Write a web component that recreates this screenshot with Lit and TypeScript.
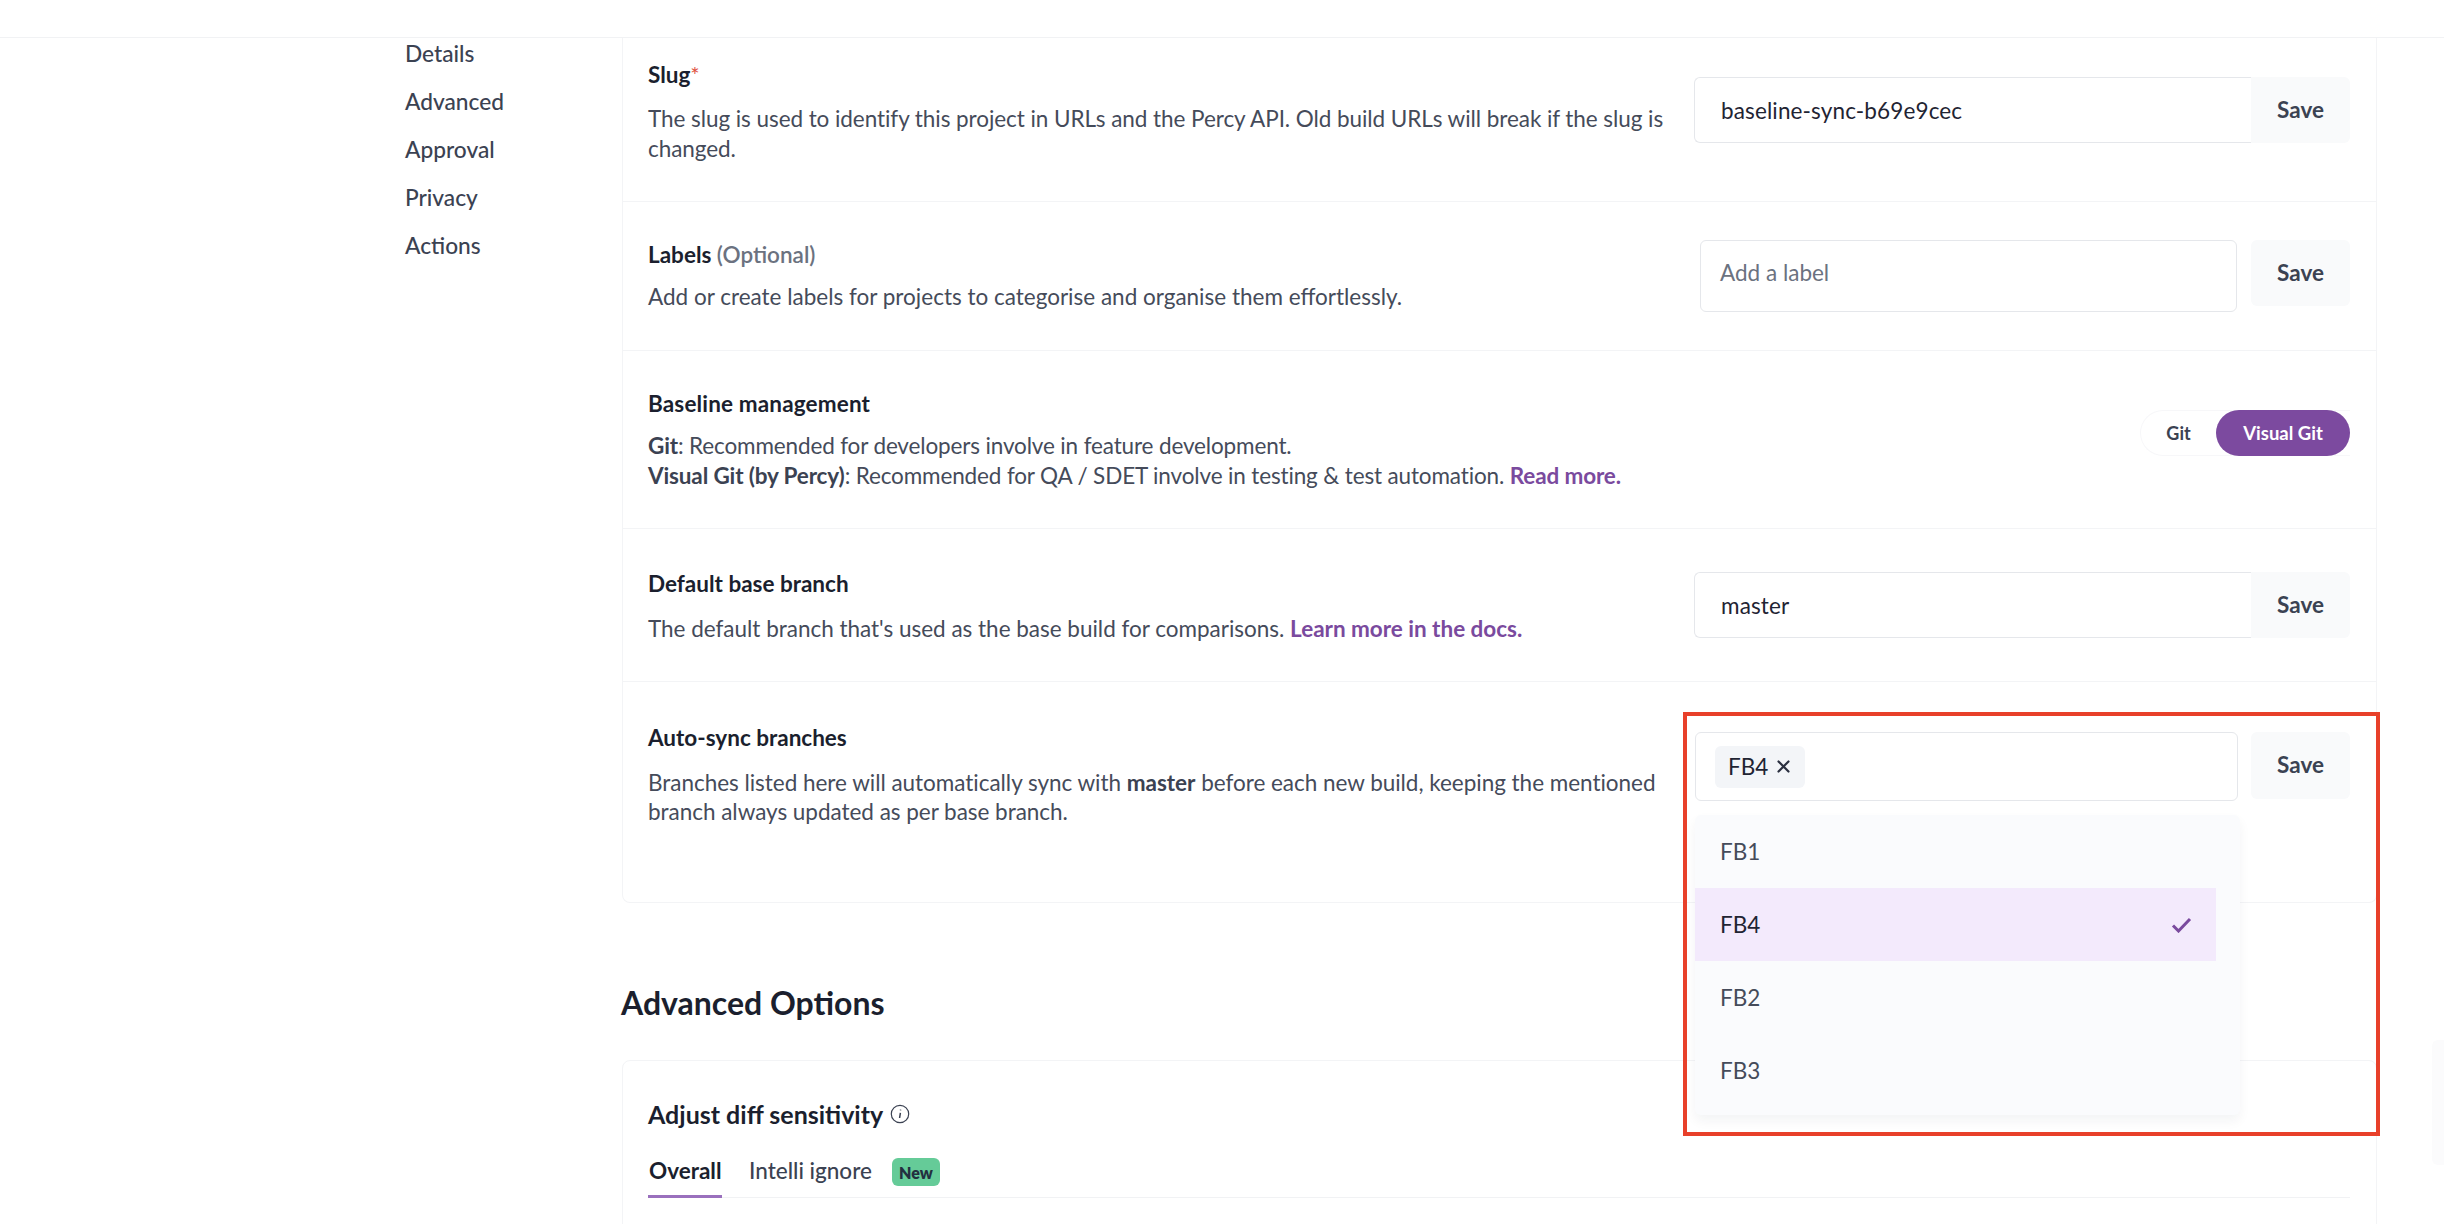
import { LitElement, html, css, svg } from "lit";
import { customElement } from "lit/decorators.js";

@customElement("app-root")
export class AppRoot extends LitElement {
  static styles = css`
    :host { display: block; position: relative; width: 2444px; height: 1224px; overflow: hidden; background: #fff;
      font-family: Lato, "Liberation Sans", sans-serif; color: #1f2433; }
    * { box-sizing: border-box; }
    .topbar { height: 38px; border-bottom: 1px solid #f1f2f4; }
    .main { display: flex; height: 1186px; }
    .side { width: 622px; padding: 0 0 0 405px; display: flex; flex-direction: column; flex: none; }
    .side a { height: 48px; line-height: 32px; font-size: 22.7px; font-weight: 500; color: #3b4252; }
    .content { width: 1755px; flex: none; }
    .card { border: 1px solid #f3f4f6; border-radius: 8px; }
    .card.first { border-top: 0; border-radius: 0 0 8px 8px; }
    .row { display: flex; justify-content: space-between; align-items: flex-start; padding: 0 26px 0 25px; border-bottom: 1px solid #f3f4f6; }
    .row:last-child { border-bottom: 0; }
    .r1 { height: 164px; }
    .r2 { height: 149px; }
    .r3 { height: 178px; }
    .r4 { height: 153px; }
    .r5 { height: 220px; }
    .text { width: 1030px; flex: none; }
    .r1 .text { margin-top: 25px; }
    .r2 .text, .r3 .text { margin-top: 41px; }
    .r4 .text { margin-top: 43px; }
    .r5 .text { margin-top: 44px; }
    .r1 .ctl { margin-top: 39px; }
    .r2 .ctl { margin-top: 38px; }
    .r4 .ctl { margin-top: 43px; }
    .r5 .ctl { margin-top: 50px; }
    .title { font-size: 22.5px; line-height: 24px; font-weight: 700; color: #1b1f2e; margin-bottom: 17.25px; }
    .r2 .title, .r3 .title { margin-bottom: 15.25px; }
    .r3 .title { letter-spacing: 0.15px; }
    .r4 .title, .r5 .title { margin-bottom: 17.5px; }
    .title .req { color: #e0523f; font-weight: 400; font-size: 22px; line-height: 0; }
    .title .opt { color: #6b7280; font-weight: 600; }
    .desc { font-size: 22.5px; line-height: 29.5px; color: #454b5a; }
    .r1 .desc { letter-spacing: -0.065px; }
    .r3 .desc { letter-spacing: -0.14px; }
    .r4 .desc { letter-spacing: -0.015px; }
    .r5 .desc { letter-spacing: -0.03px; }
    .desc b { font-weight: 700; color: #3b4252; }
    .desc a { color: #7a4a9e; font-weight: 700; }
    .ctl { display: flex; align-items: flex-start; position: relative; }
    .input { height: 66px; border: 1px solid #e5e7eb; border-radius: 6px; background: #fff; display: flex; align-items: center; font-size: 22.5px; color: #1f2433; }
    .input.joined { width: 557px; padding-left: 26px; border-right: 0; border-radius: 6px 0 0 6px; letter-spacing: 0.13px; }
    .input.placeholder { width: 537px; height: 72px; padding: 0 0 7px 19px; margin-right: 14px; color: #6b7280; letter-spacing: 0; }
    .input.tags { width: 543px; height: 69px; padding-left: 19px; margin-right: 13px; letter-spacing: 0; }
    .chip { width: 90px; height: 42px; border-radius: 6px; background: #f3f5f8; display: flex; align-items: center; padding-left: 13px; gap: 8px; }
    .chip svg { width: 15px; height: 15px; }
    .save { width: 99px; height: 66px; background: #f9fafb; border-radius: 0 6px 6px 0; display: flex; align-items: center; justify-content: center; font-size: 22.5px; font-weight: 700; color: #3b4252; padding-bottom: 2px; }
    .save.solo { border-radius: 6px; }
    .r5 .save { height: 67px; }
    .toggle { display: flex; align-items: center; height: 46px; margin-top: 59px; border: 1px solid #f7f7f9; border-radius: 23px 0 0 23px; border-right: 0; }
    .toggle .git { width: 75px; text-align: center; font-size: 18px; font-weight: 700; color: #3b4252; }
    .toggle .vg { width: 134px; height: 46px; margin-right: 0; border-radius: 23px; background: #7c4a9f; color: #fff; font-size: 18.5px; font-weight: 700; display: flex; align-items: center; justify-content: center; }
    .menu { position: absolute; left: 0; top: 83px; width: 545px; height: 300px; background: #fafbfd; border-radius: 6px; box-shadow: 0 6px 12px rgba(20, 30, 60, 0.05); padding-right: 24px; }
    .item { height: 73px; display: flex; align-items: center; justify-content: space-between; padding: 0 23px 0 25px; font-size: 22.5px; color: #454b5a; }
    .item.sel { background: #f3eafc; color: #1f2433; }
    .item svg { width: 22px; height: 16px; }
    .section { font-size: 32px; font-weight: 700; color: #1b1f2e; line-height: 40px; margin: 80px 0 37px -1px; }
    .adv { height: 200px; padding: 39px 26px 0 25px; }
    .adv h3 { display: flex; align-items: center; gap: 7px; margin: 0; font-size: 25px; line-height: 28px; font-weight: 700; color: #1b1f2e; }
    .adv h3 svg { width: 20px; height: 20px; }
    .tabs { display: flex; align-items: flex-start; height: 40px; margin-top: 30px; border-bottom: 1px solid #f1f2f4; font-size: 22.5px; }
    .tab { height: 40px; padding: 0 1px; line-height: 26px; }
    .tab.on { font-weight: 700; color: #1b1f2e; border-bottom: 3px solid #9a70bd; width: 74px; }
    .tab.off { margin-left: 26px; color: #3b4252; font-weight: 500; }
    .new { margin-left: 19px; margin-top: 0; width: 48px; height: 28px; border-radius: 6px; background: #65cb98; color: #233040; font-size: 16px; font-weight: 800; display: flex; align-items: center; justify-content: center; }
    .mark { position: absolute; left: 1683px; top: 712px; width: 697px; height: 424px; border: 4px solid #e8402a; pointer-events: none; }
    .thumb { position: absolute; right: 0; top: 1040px; width: 12px; height: 125px; background: #fbfbfc; border-radius: 6px 0 0 6px; }
  `;

  render() {
    const x = svg`<path d="M2.5 2.5 L12.5 12.5 M12.5 2.5 L2.5 12.5" stroke="#2b3040" stroke-width="2.2" stroke-linecap="round" fill="none"/>`;
    const check = svg`<path d="M2 8.5 L7.5 14 L19 2" stroke="#7a4a9e" stroke-width="3" fill="none"/>`;
    return html`
      <div class="topbar"></div>
      <div class="main">
        <nav class="side">
          <a>Details</a><a>Advanced</a><a>Approval</a><a>Privacy</a><a>Actions</a>
        </nav>
        <div class="content">
          <div class="card first">
            <div class="row r1">
              <div class="text">
                <div class="title">Slug<span class="req">*</span></div>
                <div class="desc">The slug is used to identify this project in URLs and the Percy API. Old build URLs will break if the slug is changed.</div>
              </div>
              <div class="ctl"><div class="input joined">baseline-sync-b69e9cec</div><div class="save">Save</div></div>
            </div>
            <div class="row r2">
              <div class="text">
                <div class="title">Labels <span class="opt">(Optional)</span></div>
                <div class="desc">Add or create labels for projects to categorise and organise them effortlessly.</div>
              </div>
              <div class="ctl"><div class="input placeholder">Add a label</div><div class="save solo">Save</div></div>
            </div>
            <div class="row r3">
              <div class="text">
                <div class="title">Baseline management</div>
                <div class="desc"><b>Git</b>: Recommended for developers involve in feature development.<br /><b>Visual Git (by Percy)</b>: Recommended for QA / SDET involve in testing &amp; test automation. <a>Read more.</a></div>
              </div>
              <div class="toggle"><div class="git">Git</div><div class="vg">Visual Git</div></div>
            </div>
            <div class="row r4">
              <div class="text">
                <div class="title">Default base branch</div>
                <div class="desc">The default branch that's used as the base build for comparisons. <a>Learn more in the docs.</a></div>
              </div>
              <div class="ctl"><div class="input joined">master</div><div class="save">Save</div></div>
            </div>
            <div class="row r5">
              <div class="text">
                <div class="title">Auto-sync branches</div>
                <div class="desc">Branches listed here will automatically sync with <b>master</b> before each new build, keeping the mentioned branch always updated as per base branch.</div>
              </div>
              <div class="ctl">
                <div class="input tags"><div class="chip">FB4<svg viewBox="0 0 15 15">${x}</svg></div></div>
                <div class="save solo">Save</div>
                <div class="menu">
                  <div class="item">FB1</div>
                  <div class="item sel">FB4<svg viewBox="0 0 22 16">${check}</svg></div>
                  <div class="item">FB2</div>
                  <div class="item">FB3</div>
                </div>
              </div>
            </div>
          </div>
          <div class="section">Advanced Options</div>
          <div class="card adv">
            <h3>Adjust diff sensitivity
              <svg viewBox="0 0 20 20"><circle cx="10" cy="10" r="8.7" stroke="#3b4252" stroke-width="1.2" fill="none"/><path d="M10.4 8.8 L9.6 14 M10.6 5.6 L10.5 6.4" stroke="#3b4252" stroke-width="1.5" fill="none"/></svg>
            </h3>
            <div class="tabs">
              <div class="tab on">Overall</div>
              <div class="tab off">Intelli ignore</div>
              <div class="new">New</div>
            </div>
          </div>
        </div>
      </div>
      <div class="thumb"></div>
      <div class="mark"></div>
    `;
  }
}
